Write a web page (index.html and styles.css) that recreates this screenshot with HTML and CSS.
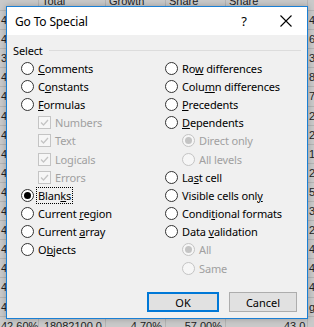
FILE: index.html
```html
<!DOCTYPE html>
<html lang="en">
<head>
    <meta charset="UTF-8">
    <title>Go To Special</title>
    <link rel="stylesheet" href="styles.css">
</head>
<body>
    <!-- Spreadsheet behind the dialog -->
    <div class="sheet">
        <div class="row head"><span></span><span>Total</span><span>Growth</span><span>Share</span><span>Share</span><span></span></div>
        <div class="row"><span>43.10%</span><span></span><span></span><span></span><span></span><span>4</span></div>
        <div class="row"><span>44.20%</span><span></span><span></span><span></span><span></span><span>6</span></div>
        <div class="row"><span>38.50%</span><span></span><span></span><span></span><span></span><span>3</span></div>
        <div class="row"><span>41.70%</span><span></span><span></span><span></span><span></span><span>8</span></div>
        <div class="row"><span>42.90%</span><span></span><span></span><span></span><span></span><span>7</span></div>
        <div class="row"><span>43.30%</span><span></span><span></span><span></span><span></span><span>2</span></div>
        <div class="row"><span>44.00%</span><span></span><span></span><span></span><span></span><span>2</span></div>
        <div class="row"><span>42.10%</span><span></span><span></span><span></span><span></span><span>1</span></div>
        <div class="row"><span>42.40%</span><span></span><span></span><span></span><span></span><span>2</span></div>
        <div class="row"><span>41.80%</span><span></span><span></span><span></span><span></span><span>5</span></div>
        <div class="row"><span>42.20%</span><span></span><span></span><span></span><span></span><span>3</span></div>
        <div class="row"><span>42.70%</span><span></span><span></span><span></span><span></span><span>2</span></div>
        <div class="row"><span>43.60%</span><span></span><span></span><span></span><span></span><span>4</span></div>
        <div class="row"><span>42.50%</span><span></span><span></span><span></span><span></span><span>4</span></div>
        <div class="row"><span>42.30%</span><span></span><span></span><span></span><span></span><span>4</span></div>
        <div class="row"><span>42.80%</span><span></span><span></span><span></span><span></span><span>g</span></div>
        <div class="row"><span>42.60%</span><span>18082100.0</span><span>4.70%</span><span>57.00%</span><span class="left">43.0</span><span></span></div>
    </div>

    <!-- Go To Special dialog -->
    <div class="dialog">
        <div class="titlebar">
            <span class="title">Go To Special</span>
            <span class="help">?</span>
            <span class="close">
                <svg width="12" height="12" viewBox="0 0 12 12"><path d="M0.5 0.5 L11.5 11.5 M11.5 0.5 L0.5 11.5" stroke="#000" stroke-width="1.1" fill="none"/></svg>
            </span>
        </div>
        <div class="content">
            <div class="group-label"><span>Select</span><span class="rule"></span></div>
            <div class="columns">
                <div class="col">
                    <div class="opt"><span class="radio"></span><span><u>C</u>omments</span></div>
                    <div class="opt"><span class="radio"></span><span>C<u>o</u>nstants</span></div>
                    <div class="opt"><span class="radio"></span><span><u>F</u>ormulas</span></div>
                    <div class="opt sub off"><span class="check"><svg width="11" height="11" viewBox="0 0 11 11"><path d="M2 5.5 L4.5 8 L9 3" stroke="#c4c4c4" stroke-width="1.3" fill="none"/></svg></span><span>Numbers</span></div>
                    <div class="opt sub off"><span class="check"><svg width="11" height="11" viewBox="0 0 11 11"><path d="M2 5.5 L4.5 8 L9 3" stroke="#c4c4c4" stroke-width="1.3" fill="none"/></svg></span><span>Text</span></div>
                    <div class="opt sub off"><span class="check"><svg width="11" height="11" viewBox="0 0 11 11"><path d="M2 5.5 L4.5 8 L9 3" stroke="#c4c4c4" stroke-width="1.3" fill="none"/></svg></span><span>Logicals</span></div>
                    <div class="opt sub off"><span class="check"><svg width="11" height="11" viewBox="0 0 11 11"><path d="M2 5.5 L4.5 8 L9 3" stroke="#c4c4c4" stroke-width="1.3" fill="none"/></svg></span><span>Errors</span></div>
                    <div class="opt"><span class="radio on"></span><span class="focus">Blan<u>k</u>s</span></div>
                    <div class="opt"><span class="radio"></span><span>Current <u>r</u>egion</span></div>
                    <div class="opt"><span class="radio"></span><span>Current <u>a</u>rray</span></div>
                    <div class="opt"><span class="radio"></span><span>O<u>b</u>jects</span></div>
                </div>
                <div class="col">
                    <div class="opt"><span class="radio"></span><span>Ro<u>w</u> differences</span></div>
                    <div class="opt"><span class="radio"></span><span>Colu<u>m</u>n differences</span></div>
                    <div class="opt"><span class="radio"></span><span><u>P</u>recedents</span></div>
                    <div class="opt"><span class="radio"></span><span><u>D</u>ependents</span></div>
                    <div class="opt sub off"><span class="radio on"></span><span>Direct only</span></div>
                    <div class="opt sub off"><span class="radio"></span><span>All levels</span></div>
                    <div class="opt"><span class="radio"></span><span>La<u>s</u>t cell</span></div>
                    <div class="opt"><span class="radio"></span><span>Visible cells onl<u>y</u></span></div>
                    <div class="opt"><span class="radio"></span><span>Condi<u>t</u>ional formats</span></div>
                    <div class="opt"><span class="radio"></span><span>Data <u>v</u>alidation</span></div>
                    <div class="opt sub off"><span class="radio on"></span><span>All</span></div>
                    <div class="opt sub off"><span class="radio"></span><span>Same</span></div>
                </div>
            </div>
            <div class="buttons">
                <button class="btn default">OK</button>
                <button class="btn cancel">Cancel</button>
            </div>
        </div>
    </div>
</body>
</html>
```

FILE: styles.css
```css
body {
    margin: 0;
    width: 314px;
    height: 327px;
    overflow: hidden;
    background: #c9c9c9;
    font-family: "Noto Sans", sans-serif;
    font-size: 11px;
    letter-spacing: -0.15px;
    color: #000;
}

/* spreadsheet */
.sheet {
    margin-top: -8px;
    margin-left: -2px;
}

.row {
    display: grid;
    grid-template-columns: 41px 67px 60px 60px 82px 30px;
    height: 18.1px;
    border-bottom: 1px solid #b4b4b4;
    font-family: "Liberation Sans", sans-serif;
    font-size: 11px;
    letter-spacing: 0;
    color: #222;
}

.row span {
    border-right: 1px solid #b4b4b4;
    padding: 3px 3px 0;
    text-align: right;
    white-space: nowrap;
    overflow: hidden;
}

.row span:last-child {
    text-align: left;
    padding-left: 1px;
}

.row.head span {
    text-align: left;
}

.row span.left {
    text-align: left;
    padding-left: 58px;
}

/* dialog */
.dialog {
    position: absolute;
    left: 6px;
    top: 6px;
    width: 300px;
    height: 311px;
    border: 1px solid #1a7fd4;
    background: #f0f0f0;
    box-shadow: 0 0 6px rgba(0, 0, 0, 0.25);
    display: flex;
    flex-direction: column;
}

.titlebar {
    height: 28px;
    background: #fff;
    display: flex;
    align-items: center;
    font-size: 12px;
}

.title {
    padding-left: 8px;
    flex: 1;
}

.help {
    width: 42px;
    text-align: center;
    font-size: 13px;
}

.close {
    width: 42px;
    display: flex;
    justify-content: center;
}

.content {
    flex: 1;
    display: flex;
    flex-direction: column;
    padding: 7px 6px 0 6px;
}

.group-label {
    display: flex;
    align-items: center;
    height: 16px;
}

.rule {
    flex: 1;
    height: 1px;
    background: #dcdcdc;
    margin-left: 6px;
}

.columns {
    display: flex;
    padding-left: 8px;
    margin-top: 1px;
}

.col {
    display: flex;
    flex-direction: column;
}

.col:first-child {
    width: 144px;
}

.opt {
    display: flex;
    align-items: center;
    height: 18.2px;
    gap: 4px;
    white-space: nowrap;
}

.opt.sub {
    padding-left: 17px;
}

.opt.off {
    color: #a0a0a0;
}

.radio {
    width: 11px;
    height: 11px;
    border: 1px solid #333;
    border-radius: 50%;
    background: #fff;
    display: flex;
    align-items: center;
    justify-content: center;
    flex: none;
}

.radio.on::after {
    content: "";
    width: 7px;
    height: 7px;
    border-radius: 50%;
    background: #000;
}

.off .radio {
    border-color: #c4c4c4;
    background: #f6f6f6;
}

.off .radio.on::after {
    background: #c4c4c4;
}

.check {
    width: 11px;
    height: 11px;
    border: 1px solid #c4c4c4;
    background: #f6f6f6;
    flex: none;
    display: flex;
}

.focus {
    outline: 1px dotted #000;
    outline-offset: 0;
    padding: 0 1px;
    margin-left: -1px;
}

.buttons {
    display: flex;
    justify-content: flex-end;
    gap: 10px;
    margin-top: 15px;
    padding-right: 4px;
}

.btn {
    width: 72px;
    height: 20px;
    background: #e1e1e1;
    border: 1px solid #adadad;
    font-family: "Noto Sans", sans-serif;
    font-size: 11px;
    color: #000;
    padding: 0;
}

.btn.cancel {
    width: 68px;
}

.btn.default {
    border: 2px solid #0078d7;
}
```
